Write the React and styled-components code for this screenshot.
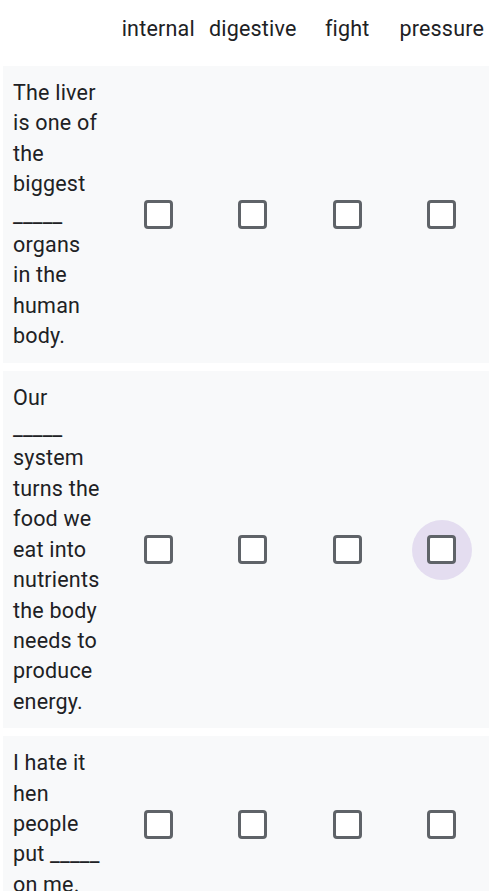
import React from "react";
import styled, { createGlobalStyle } from "styled-components";

const Global = createGlobalStyle`
  html, body { margin: 0; padding: 0; background: #ffffff; }
  body { font-family: Roboto, "Noto Sans", Arial, sans-serif; color: #202124; }
`;

const Page = styled.div`
  width: 500px;
  height: 891px;
  overflow: hidden;
  padding-left: 3px;
  box-sizing: border-box;
`;

const Grid = styled.div`
  display: grid;
  grid-template-columns: 108px repeat(4, 94.5px);
  width: 486px;
`;

const HeaderRow = styled.div`
  display: contents;
`;

const HeaderCell = styled.div`
  height: 58px;
  margin-bottom: 8px;
  display: flex;
  align-items: center;
  justify-content: center;
  font-size: 21.5px;
  letter-spacing: 0.2px;
  white-space: nowrap;
  color: #202124;
  padding-bottom: 2px;
  box-sizing: border-box;
`;

const Row = styled.div`
  grid-column: 1 / -1;
  display: grid;
  grid-template-columns: 108px repeat(4, 94.5px);
  background: #f8f9fa;
  margin-bottom: 8px;
  padding: 12px 0 11px;
`;

const Question = styled.div`
  padding-left: 10px;
  width: 88px;
  font-size: 21.5px;
  line-height: 30.4px;
  letter-spacing: 0.2px;
  color: #202124;
`;

const Cell = styled.div`
  display: flex;
  align-items: center;
  justify-content: center;
`;

const Halo = styled.div`
  width: 60px;
  height: 60px;
  border-radius: 50%;
  display: flex;
  align-items: center;
  justify-content: center;
  background: ${(p) => (p.$active ? "rgba(103, 58, 183, 0.14)" : "transparent")};
`;

const Box = styled.div`
  width: 29px;
  height: 29px;
  box-sizing: border-box;
  border: 3px solid #5f6368;
  border-radius: 4px;
  background: #ffffff;
`;

const columns = ["internal", "digestive", "fight", "pressure"];

const rows = [
  { text: "The liver is one of the biggest _____ organs in the human body.", active: -1 },
  {
    text: "Our _____ system turns the food we eat into nutrients the body needs to produce energy.",
    active: 3,
  },
  { text: "I hate it hen people put _____ on me.", active: -1 },
];

export default function App() {
  return (
    <>
      <Global />
      <Page>
        <Grid>
          <HeaderRow>
            <HeaderCell />
            {columns.map((c) => (
              <HeaderCell key={c}>{c}</HeaderCell>
            ))}
          </HeaderRow>
          {rows.map((r, i) => (
            <Row key={i}>
              <Question>{r.text}</Question>
              {columns.map((c, j) => (
                <Cell key={c}>
                  <Halo $active={r.active === j}>
                    <Box />
                  </Halo>
                </Cell>
              ))}
            </Row>
          ))}
        </Grid>
      </Page>
    </>
  );
}
